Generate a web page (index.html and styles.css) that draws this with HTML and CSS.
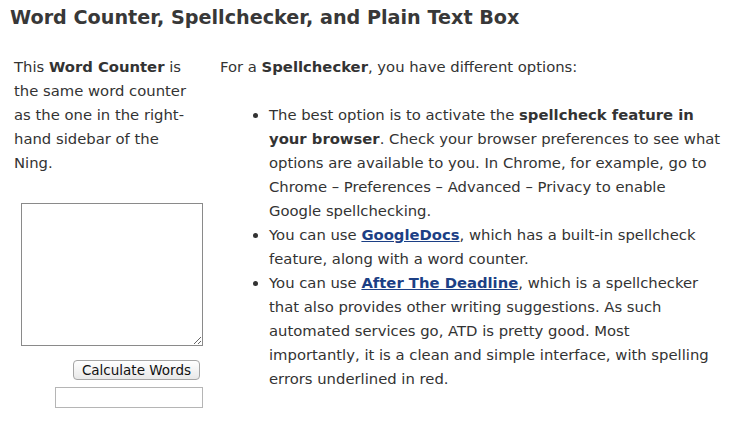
FILE: index.html
```html
<!DOCTYPE html>
<html lang="en">
<head>
  <meta charset="UTF-8">
  <title>Word Counter, Spellchecker, and Plain Text Box</title>
  <link rel="stylesheet" href="styles.css">
</head>
<body>
  <div class="page">
    <h2>Word Counter, Spellchecker, and Plain Text Box</h2>
    <div class="columns">
      <div class="side">
        <p>This <strong>Word Counter</strong> is the same word counter as the one in the right-hand sidebar of the Ning.</p>
        <form class="counter" onsubmit="return false">
          <textarea id="words"></textarea>
          <button type="button" onclick="countWords()">Calculate Words</button>
          <input type="text" id="total">
        </form>
      </div>
      <div class="main">
        <p>For a <strong>Spellchecker</strong>, you have different options:</p>
        <ul>
          <li>The best option is to activate the <strong>spellcheck feature in your browser</strong>. Check your browser preferences to see what options are available to you. In Chrome, for example, go to Chrome &ndash; Preferences &ndash; Advanced &ndash; Privacy to enable Google spellchecking.</li>
          <li>You can use <a href="#">GoogleDocs</a>, which has a built-in spellcheck feature, along with a word counter.</li>
          <li>You can use <a href="#">After The Deadline</a>, which is a spellchecker that also provides other writing suggestions. As such automated services go, ATD is pretty good. Most importantly, it is a clean and simple interface, with spelling errors underlined in red.</li>
        </ul>
      </div>
    </div>
  </div>
  <script>
    function countWords() {
      const text = document.getElementById("words").value.trim();
      document.getElementById("total").value = text ? text.split(/\s+/).length : 0;
    }
  </script>
</body>
</html>
```

FILE: styles.css
```css
body {
  margin: 0;
  background: #fff;
  color: #333;
  font-family: "DejaVu Sans", Verdana, sans-serif;
  font-size: 14.8px;
  line-height: 24px;
}
.page {
  padding: 0 10px;
}
h2 {
  margin: 0;
  padding-top: 5px;
  font-size: 19.2px;
  line-height: 26px;
  font-weight: bold;
  color: #383838;
}
.columns {
  display: flex;
  margin-top: 24px;
}
.side {
  width: 189px;
  padding-left: 4px;
  flex-shrink: 0;
}
.side p {
  margin: 0;
  padding-right: 3px;
}
.counter {
  display: flex;
  flex-direction: column;
  align-items: flex-end;
  margin-top: 28px;
}
.counter textarea {
  width: 182px;
  height: 143px;
  box-sizing: border-box;
  border: 1px solid #8a8a8a;
  margin: 0;
  padding: 2px;
}
.counter button {
  margin: 14px 3px 0 0;
  height: 20px;
  padding: 0 8px;
  font-family: "DejaVu Sans", sans-serif;
  font-size: 13.5px;
  color: #111;
  background: linear-gradient(#fff, #e8e8e8);
  border: 1px solid #a5a5a5;
  border-radius: 4px;
}
.counter input {
  margin-top: 7px;
  width: 148px;
  height: 21px;
  box-sizing: border-box;
  border: 1px solid #b5b5b5;
}
.main {
  margin-left: 17px;
  width: 502px;
}
.main p {
  margin: 0 0 24px;
}
.main ul {
  margin: 0;
  padding-left: 49px;
}
.main a {
  color: #1c3f85;
  font-weight: bold;
  text-decoration: underline;
}
```
